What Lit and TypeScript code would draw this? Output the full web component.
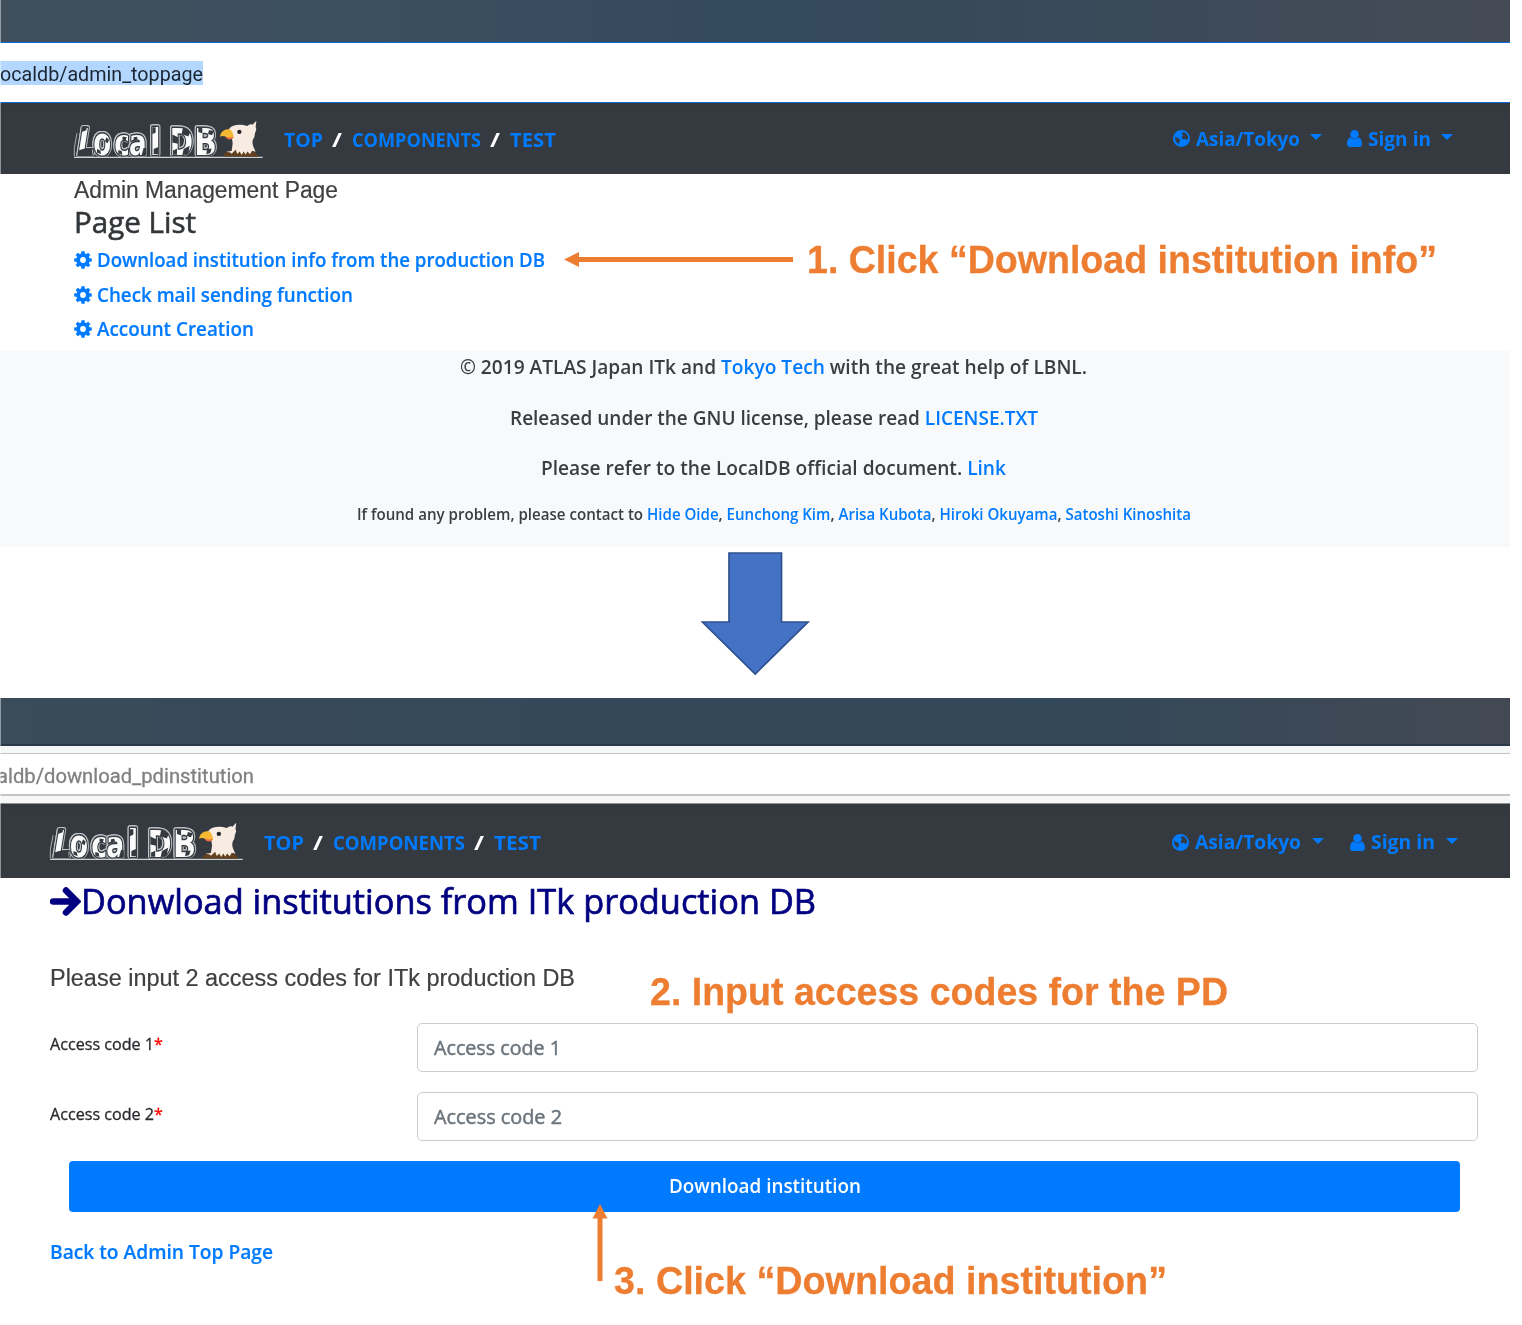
import { LitElement, html, css, svg } from "lit";
import { customElement, property } from "lit/decorators.js";

/** A single line of text condensed or widened to a given measure. */
@customElement("fit-text")
class FitText extends LitElement {
  @property({ type: Number }) w = 0;
  static styles = css`
    :host { display: inline-block; white-space: nowrap; flex: none; }
    .run { display: inline-block; transform-origin: 0 50%; }
  `;
  render() {
    return html`<span class="run"><slot></slot></span>`;
  }
  updated() {
    const run = this.renderRoot.querySelector(".run") as HTMLElement;
    this.style.width = `${this.w}px`;
    run.style.transform = "none";
    const natural = run.getBoundingClientRect().width;
    if (natural > 0) run.style.transform = `scaleX(${this.w / natural})`;
  }
}

@customElement("brand-logo")
class BrandLogo extends LitElement {
  static styles = css`
    :host { display: block; }
    svg { display: block; width: 100%; height: 100%; overflow: visible; }
    text { font-family: "DejaVu Sans", sans-serif; font-weight: 700; stroke-linejoin: round; }
    .word { fill: #fbfbfb; stroke: #343a40; stroke-width: 9; paint-order: stroke;
      filter: drop-shadow(2.5px 0 0 #c3c6ca) drop-shadow(-2.5px 0 0 #c3c6ca) drop-shadow(0 -2.5px 0 #c3c6ca); }
  `;
  render() {
    return html`<svg viewBox="43 40 567 118" preserveAspectRatio="none">
      <g class="word">
        <text transform="translate(49 145) skewX(-9) scale(.72 1)" font-size="112">L</text>
        <text transform="translate(101 145) scale(.7 1)" font-size="112">o</text>
        <text transform="translate(164 145) scale(.74 1)" font-size="106">c</text>
        <text transform="translate(208 145) scale(.74 1)" font-size="106">a</text>
        <text transform="translate(270 145) scale(.85 1)" font-size="114">l</text>
        <text transform="translate(330 145) scale(.74 1)" font-size="114">D</text>
        <text transform="translate(404 145) scale(.78 1)" font-size="114">B</text>
      </g>
      <g fill="#343a40">
        <path d="M66 60l16-2-2 13-14 5zM70 128l28-4v22H54l2-14zM140 92l8 8-4 10-8-5zM112 128l10 4 2 12-12-6zM189 90l12 2-3 10-10-3zM176 131l10 3 2 12-12-5zM222 92l10-1 2 8-12 3zM252 124l8 2v20h-14zM278 62h10v16l-10 5zM282 128l14-6v22h-14zM338 84l17 8v20l-17-4zM370 62l22 14-6 14-20-8zM372 128l18-10-4 24-18 4zM340 132l12-5v18h-12zM416 60l12 5v15l-12-4zM448 70l14 4-5 12-12-4zM442 128l14-2-4 14-12 4z"/>
      </g>
      <path d="M44 150V124L52 80" fill="none" stroke="#c3c6ca" stroke-width="2.500"/>
      <path d="M43 153H609" stroke="#d0d2d4" stroke-width="4"/>
      <path d="M490 150C494 137 510 132 526 130C550 127 577 131 588 139C592 142 593 147 597 151Z" fill="#60401f"/>
      <path d="M516 134L519 110C518 100 516 92 514 86L508 67C517 55 540 51 562 58C567 56 572 51 579 54L590 42L588 62L590 68L586 80L584 92C574 105 579 118 588 136L577 133L571 144L563 135L558 145L552 135L546 146L540 135L533 143L528 130L516 142L512 138L500 136Z" fill="#f8ebe1"/>
      <path d="M510 68C497 66 482 74 481 91C489 85 498 90 503 94C511 98 519 99 522 92C520 82 519 74 510 68Z" fill="#f4b832"/>
      <path d="M498 91C500 99 510 101 518 97L521 91Q511 95 498 91Z" fill="#ee6b42"/>
      <circle cx="539" cy="76" r="6.500" fill="#22252a"/>
    </svg>`;
  }
}

const globe = html`<svg class="globe" viewBox="0 0 17 17">
  <circle cx="8.500" cy="8.500" r="8.500" fill="#007bff"/>
  <path fill="#343a40" d="M9.200 2.200l2.600.3 2 1.700 1.300 2.600-.3 2.300-1.300.9-1.700-1.300-1.600.6-1.600-1 .5-1.700 1.400-1.300-1.600-.9zM1.900 6.300l1.300 1.200 2 .8 2 1.500-.3 1.800-1 .8.1 1.600-2-1.200-1.500-2.400z"/>
</svg>`;
const user = html`<svg class="user" viewBox="0 0 15 17">
  <ellipse cx="7.500" cy="4.400" rx="4.200" ry="4.400" fill="#007bff"/>
  <path fill="#007bff" d="M3.400 7.600Q7.500 10.600 11.600 7.600C14 8.200 15 10.600 14.900 14Q14.800 17 12.300 17H2.700Q.2 17 .1 14C0 10.600 1 8.200 3.400 7.600z"/>
</svg>`;
const caret = html`<svg class="caret" viewBox="0 0 12 6"><path d="M0 0H12L6 6Z" fill="#007bff"/></svg>`;
const gear = html`<svg class="gear" viewBox="0 0 18 18">
  <g fill="#007bff">
    ${[0, 45, 90, 135].map((a) => svg`<path transform="rotate(${a} 9 9)" d="M7 4L7.400 .2h3.200L11 4v10l-.4 3.800h-3.200L7 14z"/>`)}
    <circle cx="9" cy="9" r="6.700"/>
  </g>
  <circle cx="9" cy="9" r="2.900" fill="#fff"/>
</svg>`;

@customElement("app-root")
class AppRoot extends LitElement {
  static styles = css`
    :host {
      display: block; position: relative; width: 1522px; height: 1325px; overflow: hidden;
      background: #fff; color: #333639; font: 500 19.8px "Open Sans", "Noto Sans", sans-serif;
    }
    * { box-sizing: border-box; }
    .screen { width: 1510px; display: flex; flex-direction: column; }
    .second { margin-top: 151px; }
    .band { height: 42px; background: linear-gradient(90deg, #404f5c, #3b4f60 25%, #33495c 52%, #3b4a59 76%, #454b55); }
    .second .band { height: 48px; border-bottom: 2px solid #2b3a48; background: linear-gradient(90deg, #3a4b59, #34485a 45%, #334859 70%, #434954); }
    .address { height: 61px; border: solid #1467d8; border-width: 1px 0; display: flex; align-items: center; padding-top: 1px;
      font-family: Roboto, sans-serif; font-weight: 400; font-size: 19.5px; color: #1b2633; }
    .selected { height: 24px; line-height: 27px; background: #b3d7ff; display: block; }
    .chrome { height: 58px; padding: 7px 0 8px; background: #f6f7f7; border-bottom: 1px solid #8c9092; }
    .field { height: 43px; border: solid #c3c4c4; border-width: 1px 0 2px; background: #fff; display: flex; align-items: center;
      font-family: Roboto, sans-serif; font-weight: 400; font-size: 19.5px; color: #818181; padding-top: 5px; -webkit-text-stroke: .3px; }
    .field fit-text { margin-left: -3px; }
    nav { height: 71px; background: linear-gradient(#33383b, #343a40 14px); display: flex; align-items: center;
      font-weight: 700; color: #007bff; padding: 2px 0 0 74px; font-size: 19.5px; line-height: 26px; }
    .second nav { height: 74px; padding: 4px 0 0 50px; }
    nav brand-logo { width: 189px; height: 39px; margin: 0 21px 0 0; }
    .second nav brand-logo { width: 193px; margin: -4px 21px 0 0; }
    .sep { color: #fff; margin: 0 10px 0 9px; }
    .end { margin-left: auto; display: flex; align-items: center; padding-right: 57px; margin-top: -2px; }
    .second .end { padding-right: 52px; }
    .globe { width: 17px; height: 17px; margin-right: 6px; }
    .user { width: 15px; height: 17px; margin: 0 6px 0 25px; }
    .second .user { margin-left: 26px; }
    .caret { width: 12px; height: 6px; margin: -3px 0 0 10px; }
    .second .end fit-text + .caret { margin-left: 11px; }
    .main { height: 177px; padding: 1px 0 0 74px; display: flex; flex-direction: column; }
    .plain { font-family: "Liberation Sans", sans-serif; font-weight: 400; font-size: 23px; line-height: 31px; height: 30px; color: #3f4042; -webkit-text-stroke: .2px; }
    .title { font-size: 30px; line-height: 33px; height: 38px; -webkit-text-stroke: .6px; }
    .item { display: flex; align-items: center; height: 34.500px; color: #007bff; font-weight: 600; line-height: 27px; -webkit-text-stroke: .2px; }
    .item fit-text { margin-top: -1px; }
    .gear { width: 18px; height: 18px; margin-right: 5px; }
    .foot { height: 196px; background: #f7f9fb; padding: 2px 0 0 37px; display: flex; flex-direction: column; align-items: center; font-weight: 600; color: #3b3e41; }
    .foot .row { height: 28px; line-height: 28px; margin-bottom: 22.500px; }
    .foot .small { font-size: 15.500px; margin-top: -4.500px; }
    a { color: #007bff; }
    .h { display: flex; align-items: center; height: 47px; padding-left: 50px; color: #000080; font-size: 35px; line-height: 46px; -webkit-text-stroke: .7px; }
    .h fit-text { margin-top: -2px; }
    .go { width: 31px; height: 31px; }
    .prompt { margin: 38px 0 0 50px; }
    form { display: flex; flex-direction: column; padding-left: 50px; margin-top: 30px; }
    .row-in { display: flex; height: 49px; margin-bottom: 20px; align-items: center; }
    .label { width: 367px; font-size: 15.500px; margin-top: -7px; color: #292b2e; white-space: nowrap; -webkit-text-stroke: .3px; }
    .label i { font-style: normal; color: #f00; }
    .row-in + .row-in .label { margin-top: -5px; }
    .input { width: 1061px; height: 49px; border: 1px solid #c9ced3; border-radius: 5px; padding: 0 16px 1px; color: #6c757d; display: flex; align-items: center; -webkit-text-stroke: .5px; }
    .button { width: 1391px; height: 51px; margin-left: 19px; border-radius: 4px; background: #007bff; color: #fff; display: flex; align-items: center; justify-content: center; padding-bottom: 3px; font-weight: 600; }
    .back { margin: 26px 0 0 50px; color: #007bff; line-height: 28px; font-weight: 600; -webkit-text-stroke: .2px; }
    .edge { position: absolute; left: 0; width: 1px; background: #fff; opacity: .45; }
    .e1 { top: 0; height: 174px; } .e2 { top: 698px; height: 180px; }
    .note { position: absolute; color: #ed7d31; font: 700 38.500px/44px "Liberation Sans", sans-serif; -webkit-text-stroke: .3px; }
    .n1 { left: 807px; top: 238px; } .n2 { left: 650px; top: 970px; } .n3 { left: 614px; top: 1259px; }
    .shapes { position: absolute; inset: 0; width: 1522px; height: 1325px; pointer-events: none; }
  `;

  private nav(t: number, c: number, s: number, z: number, g: number) {
    return html`<nav>
      <brand-logo></brand-logo>
      <fit-text .w=${t}>TOP</fit-text><fit-text class="sep" .w=${10}>/</fit-text>
      <fit-text .w=${c}>COMPONENTS</fit-text><fit-text class="sep" .w=${10}>/</fit-text>
      <fit-text .w=${s}>TEST</fit-text>
      <div class="end">
        ${globe}<fit-text .w=${z}>Asia/Tokyo</fit-text>${caret}
        ${user}<fit-text .w=${g}>Sign in</fit-text>${caret}
      </div>
    </nav>`;
  }

  render() {
    return html`
      <section class="screen">
        <div class="band"></div>
        <div class="address"><fit-text class="selected" .w=${203}>ocaldb/admin_toppage</fit-text></div>
        ${this.nav(39, 129, 46, 104, 63)}
        <div class="main">
          <div class="plain"><fit-text .w=${264}>Admin Management Page</fit-text></div>
          <div class="title"><fit-text .w=${122}>Page List</fit-text></div>
          <div class="item">${gear}<fit-text .w=${448}>Download institution info from the production DB</fit-text></div>
          <div class="item">${gear}<fit-text .w=${256}>Check mail sending function</fit-text></div>
          <div class="item">${gear}<fit-text .w=${157}>Account Creation</fit-text></div>
        </div>
        <div class="foot">
          <div class="row"><fit-text .w=${627}>© 2019 ATLAS Japan ITk and <a>Tokyo Tech</a> with the great help of LBNL.</fit-text></div>
          <div class="row"><fit-text .w=${528}>Released under the GNU license, please read <a>LICENSE.TXT</a></fit-text></div>
          <div class="row"><fit-text .w=${465}>Please refer to the LocalDB official document. <a>Link</a></fit-text></div>
          <div class="row small"><fit-text .w=${290}>If found any problem, please contact to&nbsp;</fit-text><fit-text .w=${544}><a>Hide Oide</a>, <a>Eunchong Kim</a>, <a>Arisa Kubota</a>, <a>Hiroki Okuyama</a>, <a>Satoshi Kinoshita</a></fit-text></div>
        </div>
      </section>

      <section class="screen second">
        <div class="band"></div>
        <div class="chrome"><div class="field"><fit-text .w=${257}>aldb/download_pdinstitution</fit-text></div></div>
        ${this.nav(40, 132, 47, 106, 64)}
        <div class="h">
          <svg class="go" viewBox="0 0 31 31"><path d="M3 15.500H25M16 4.500L27 15.500L16 26.500" fill="none" stroke="#000080" stroke-width="6.500" stroke-linecap="round"/></svg>
          <fit-text .w=${735}>Donwload institutions from ITk production DB</fit-text>
        </div>
        <div class="plain prompt"><fit-text .w=${525}>Please input 2 access codes for ITk production DB</fit-text></div>
        <form>
          <div class="row-in"><div class="label"><fit-text .w=${113}>Access code 1<i>*</i></fit-text></div><div class="input"><fit-text .w=${127}>Access code 1</fit-text></div></div>
          <div class="row-in"><div class="label"><fit-text .w=${113}>Access code 2<i>*</i></fit-text></div><div class="input"><fit-text .w=${128}>Access code 2</fit-text></div></div>
          <div class="button"><fit-text .w=${192}>Download institution</fit-text></div>
        </form>
        <div class="back"><fit-text .w=${223}>Back to Admin Top Page</fit-text></div>
      </section>

      <div class="edge e1"></div><div class="edge e2"></div>
      <svg class="shapes" viewBox="0 0 1522 1325">
        <path d="M729 553H781.500V622H808L755.200 674L702.500 622H729Z" fill="#4472c4" stroke="#2f528f" stroke-width="1.700"/>
        <path d="M564 259.500L579 252V257H793V262H579V267Z" fill="#ed7d31"/>
        <path d="M600 1204L607.500 1218.500H602.500V1281H597.500V1218.500H592.500Z" fill="#ed7d31"/>
      </svg>
      <fit-text class="note n1" .w=${630}>1. Click “Download institution info”</fit-text>
      <fit-text class="note n2" .w=${578}>2. Input access codes for the PD</fit-text>
      <fit-text class="note n3" .w=${553}>3. Click “Download institution”</fit-text>
    `;
  }
}
